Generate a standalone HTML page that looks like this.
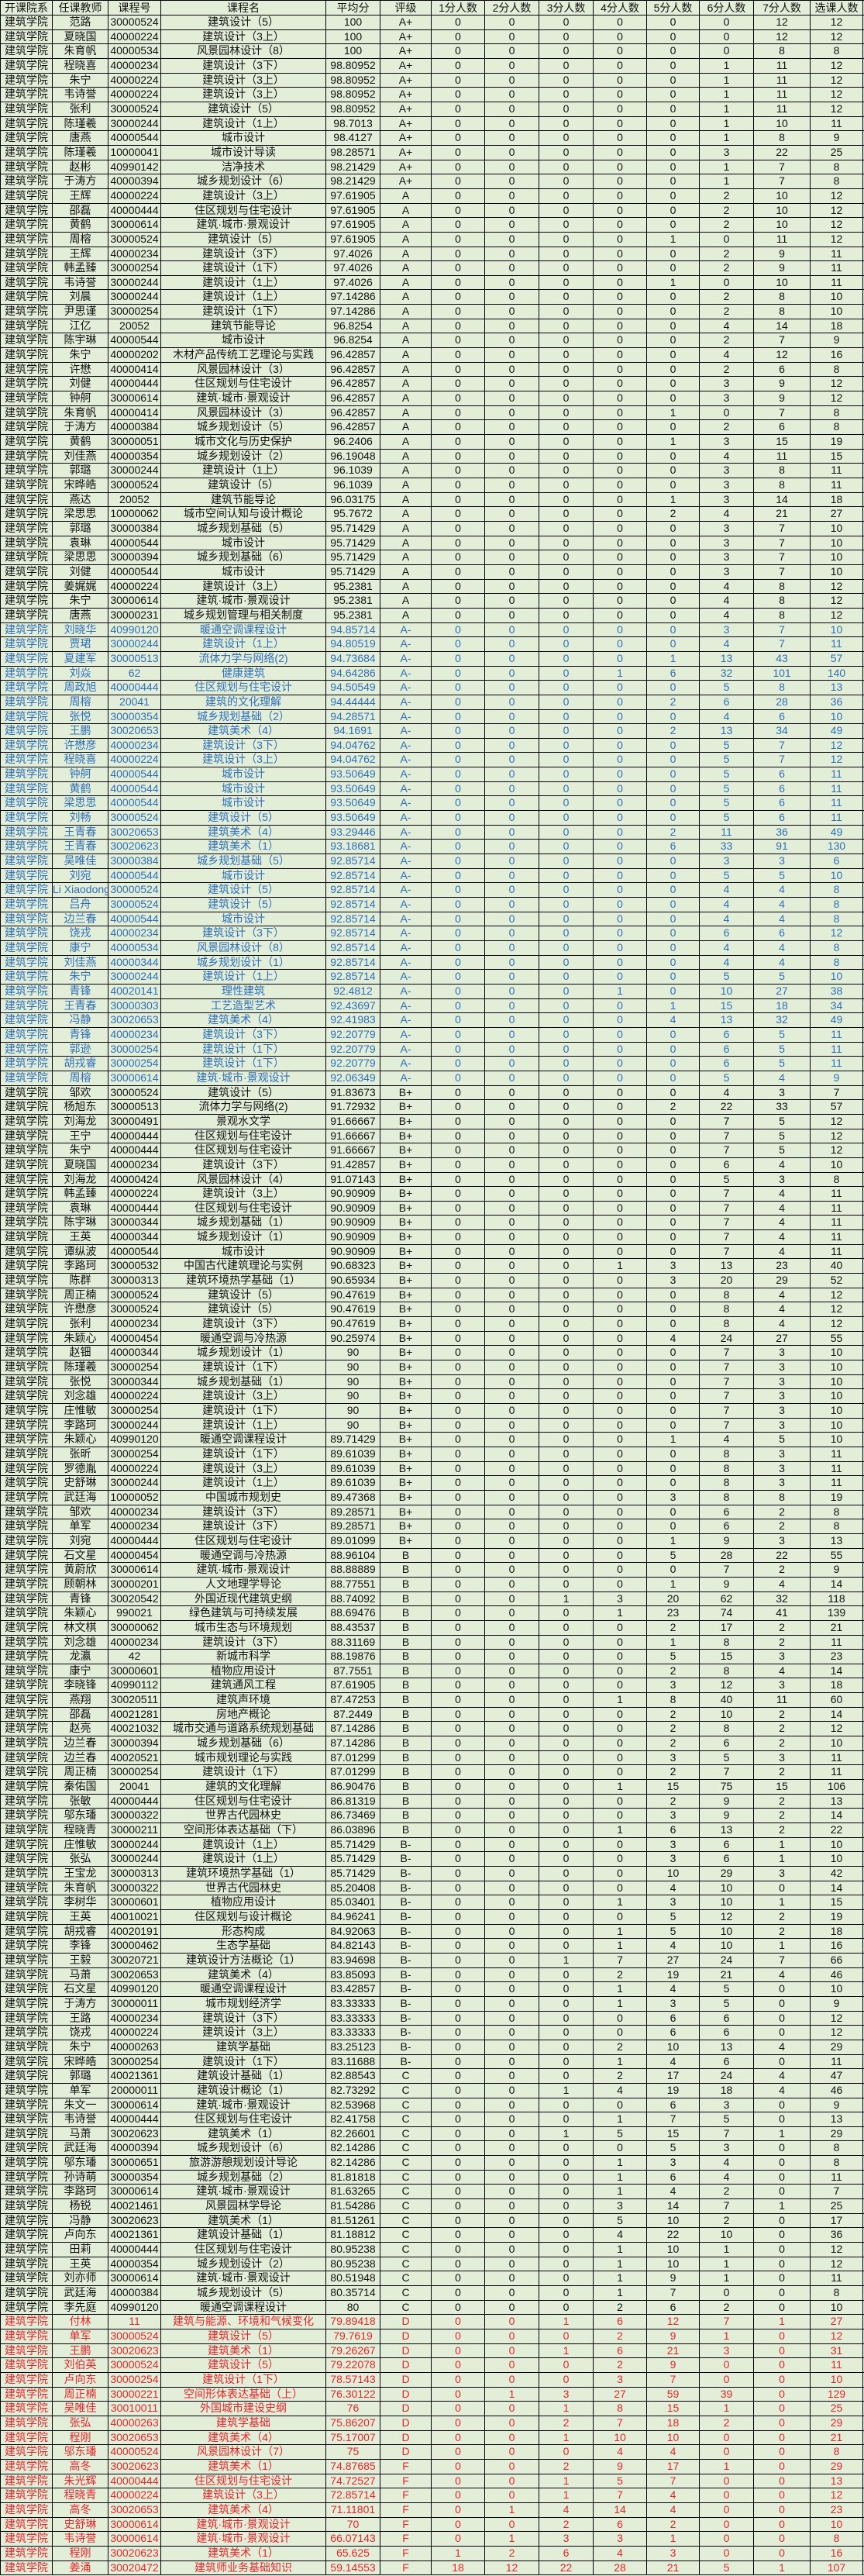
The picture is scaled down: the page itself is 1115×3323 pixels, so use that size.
<!DOCTYPE html>
<html><head><meta charset="utf-8">
<style>
*{margin:0;padding:0;box-sizing:border-box}
html,body{width:1115px;height:3323px;background:#e3eed9;overflow:hidden}
body{font-family:"Liberation Sans","Noto Sans CJK SC",sans-serif;font-size:14px;color:#111}
.t{position:absolute;left:0;top:0;width:1115px;border-top:1px solid #000}
.r{display:flex;height:18.66px;border-bottom:1px solid #000;line-height:17.5px;white-space:nowrap}
.h{height:19px;line-height:18px}
.r i{font-style:normal;text-align:center;border-right:1px solid #000;overflow:hidden;flex:none}
.r i:nth-child(1){width:68px;text-align:left;padding-left:5px;border-left:1px solid #000}
.r i:nth-child(2){width:72px}
.r i:nth-child(3){width:68px}
.r i:nth-child(4){width:213px}
.r i:nth-child(5){width:70px}
.r i:nth-child(6){width:66px}
.r i:nth-child(7){width:69px}
.r i:nth-child(8){width:70px}
.r i:nth-child(9){width:70px}
.r i:nth-child(10){width:69px}
.r i:nth-child(11){width:68px}
.r i:nth-child(12){width:70px}
.r i:nth-child(13){width:73px}
.r i:nth-child(14){width:68px}
.b{color:#2f6fb8}
.d{color:#e3262b}
</style></head><body>
<div class="t">
<div class="r h"><i>开课院系</i><i>任课教师</i><i>课程号</i><i>课程名</i><i>平均分</i><i>评级</i><i>1分人数</i><i>2分人数</i><i>3分人数</i><i>4分人数</i><i>5分人数</i><i>6分人数</i><i>7分人数</i><i>选课人数</i></div>
<div class="r"><i>建筑学院</i><i>范路</i><i>30000524</i><i>建筑设计（5）</i><i>100</i><i>A+</i><i>0</i><i>0</i><i>0</i><i>0</i><i>0</i><i>0</i><i>12</i><i>12</i></div>
<div class="r"><i>建筑学院</i><i>夏晓国</i><i>40000224</i><i>建筑设计（3上）</i><i>100</i><i>A+</i><i>0</i><i>0</i><i>0</i><i>0</i><i>0</i><i>0</i><i>12</i><i>12</i></div>
<div class="r"><i>建筑学院</i><i>朱育帆</i><i>40000534</i><i>风景园林设计（8）</i><i>100</i><i>A+</i><i>0</i><i>0</i><i>0</i><i>0</i><i>0</i><i>0</i><i>8</i><i>8</i></div>
<div class="r"><i>建筑学院</i><i>程晓喜</i><i>40000234</i><i>建筑设计（3下）</i><i>98.80952</i><i>A+</i><i>0</i><i>0</i><i>0</i><i>0</i><i>0</i><i>1</i><i>11</i><i>12</i></div>
<div class="r"><i>建筑学院</i><i>朱宁</i><i>40000224</i><i>建筑设计（3上）</i><i>98.80952</i><i>A+</i><i>0</i><i>0</i><i>0</i><i>0</i><i>0</i><i>1</i><i>11</i><i>12</i></div>
<div class="r"><i>建筑学院</i><i>韦诗誉</i><i>40000224</i><i>建筑设计（3上）</i><i>98.80952</i><i>A+</i><i>0</i><i>0</i><i>0</i><i>0</i><i>0</i><i>1</i><i>11</i><i>12</i></div>
<div class="r"><i>建筑学院</i><i>张利</i><i>30000524</i><i>建筑设计（5）</i><i>98.80952</i><i>A+</i><i>0</i><i>0</i><i>0</i><i>0</i><i>0</i><i>1</i><i>11</i><i>12</i></div>
<div class="r"><i>建筑学院</i><i>陈瑾羲</i><i>30000244</i><i>建筑设计（1上）</i><i>98.7013</i><i>A+</i><i>0</i><i>0</i><i>0</i><i>0</i><i>0</i><i>1</i><i>10</i><i>11</i></div>
<div class="r"><i>建筑学院</i><i>唐燕</i><i>40000544</i><i>城市设计</i><i>98.4127</i><i>A+</i><i>0</i><i>0</i><i>0</i><i>0</i><i>0</i><i>1</i><i>8</i><i>9</i></div>
<div class="r"><i>建筑学院</i><i>陈瑾羲</i><i>10000041</i><i>城市设计导读</i><i>98.28571</i><i>A+</i><i>0</i><i>0</i><i>0</i><i>0</i><i>0</i><i>3</i><i>22</i><i>25</i></div>
<div class="r"><i>建筑学院</i><i>赵彬</i><i>40990142</i><i>洁净技术</i><i>98.21429</i><i>A+</i><i>0</i><i>0</i><i>0</i><i>0</i><i>0</i><i>1</i><i>7</i><i>8</i></div>
<div class="r"><i>建筑学院</i><i>于涛方</i><i>40000394</i><i>城乡规划设计（6）</i><i>98.21429</i><i>A+</i><i>0</i><i>0</i><i>0</i><i>0</i><i>0</i><i>1</i><i>7</i><i>8</i></div>
<div class="r"><i>建筑学院</i><i>王辉</i><i>40000224</i><i>建筑设计（3上）</i><i>97.61905</i><i>A</i><i>0</i><i>0</i><i>0</i><i>0</i><i>0</i><i>2</i><i>10</i><i>12</i></div>
<div class="r"><i>建筑学院</i><i>邵磊</i><i>40000444</i><i>住区规划与住宅设计</i><i>97.61905</i><i>A</i><i>0</i><i>0</i><i>0</i><i>0</i><i>0</i><i>2</i><i>10</i><i>12</i></div>
<div class="r"><i>建筑学院</i><i>黄鹤</i><i>30000614</i><i>建筑·城市·景观设计</i><i>97.61905</i><i>A</i><i>0</i><i>0</i><i>0</i><i>0</i><i>0</i><i>2</i><i>10</i><i>12</i></div>
<div class="r"><i>建筑学院</i><i>周榕</i><i>30000524</i><i>建筑设计（5）</i><i>97.61905</i><i>A</i><i>0</i><i>0</i><i>0</i><i>0</i><i>1</i><i>0</i><i>11</i><i>12</i></div>
<div class="r"><i>建筑学院</i><i>王辉</i><i>40000234</i><i>建筑设计（3下）</i><i>97.4026</i><i>A</i><i>0</i><i>0</i><i>0</i><i>0</i><i>0</i><i>2</i><i>9</i><i>11</i></div>
<div class="r"><i>建筑学院</i><i>韩孟臻</i><i>30000254</i><i>建筑设计（1下）</i><i>97.4026</i><i>A</i><i>0</i><i>0</i><i>0</i><i>0</i><i>0</i><i>2</i><i>9</i><i>11</i></div>
<div class="r"><i>建筑学院</i><i>韦诗誉</i><i>30000244</i><i>建筑设计（1上）</i><i>97.4026</i><i>A</i><i>0</i><i>0</i><i>0</i><i>0</i><i>1</i><i>0</i><i>10</i><i>11</i></div>
<div class="r"><i>建筑学院</i><i>刘晨</i><i>30000244</i><i>建筑设计（1上）</i><i>97.14286</i><i>A</i><i>0</i><i>0</i><i>0</i><i>0</i><i>0</i><i>2</i><i>8</i><i>10</i></div>
<div class="r"><i>建筑学院</i><i>尹思谨</i><i>30000254</i><i>建筑设计（1下）</i><i>97.14286</i><i>A</i><i>0</i><i>0</i><i>0</i><i>0</i><i>0</i><i>2</i><i>8</i><i>10</i></div>
<div class="r"><i>建筑学院</i><i>江亿</i><i>20052</i><i>建筑节能导论</i><i>96.8254</i><i>A</i><i>0</i><i>0</i><i>0</i><i>0</i><i>0</i><i>4</i><i>14</i><i>18</i></div>
<div class="r"><i>建筑学院</i><i>陈宇琳</i><i>40000544</i><i>城市设计</i><i>96.8254</i><i>A</i><i>0</i><i>0</i><i>0</i><i>0</i><i>0</i><i>2</i><i>7</i><i>9</i></div>
<div class="r"><i>建筑学院</i><i>朱宁</i><i>40000202</i><i>木材产品传统工艺理论与实践</i><i>96.42857</i><i>A</i><i>0</i><i>0</i><i>0</i><i>0</i><i>0</i><i>4</i><i>12</i><i>16</i></div>
<div class="r"><i>建筑学院</i><i>许懋</i><i>40000414</i><i>风景园林设计（3）</i><i>96.42857</i><i>A</i><i>0</i><i>0</i><i>0</i><i>0</i><i>0</i><i>2</i><i>6</i><i>8</i></div>
<div class="r"><i>建筑学院</i><i>刘健</i><i>40000444</i><i>住区规划与住宅设计</i><i>96.42857</i><i>A</i><i>0</i><i>0</i><i>0</i><i>0</i><i>0</i><i>3</i><i>9</i><i>12</i></div>
<div class="r"><i>建筑学院</i><i>钟舸</i><i>30000614</i><i>建筑·城市·景观设计</i><i>96.42857</i><i>A</i><i>0</i><i>0</i><i>0</i><i>0</i><i>0</i><i>3</i><i>9</i><i>12</i></div>
<div class="r"><i>建筑学院</i><i>朱育帆</i><i>40000414</i><i>风景园林设计（3）</i><i>96.42857</i><i>A</i><i>0</i><i>0</i><i>0</i><i>0</i><i>1</i><i>0</i><i>7</i><i>8</i></div>
<div class="r"><i>建筑学院</i><i>于涛方</i><i>40000384</i><i>城乡规划设计（5）</i><i>96.42857</i><i>A</i><i>0</i><i>0</i><i>0</i><i>0</i><i>0</i><i>2</i><i>6</i><i>8</i></div>
<div class="r"><i>建筑学院</i><i>黄鹤</i><i>30000051</i><i>城市文化与历史保护</i><i>96.2406</i><i>A</i><i>0</i><i>0</i><i>0</i><i>0</i><i>1</i><i>3</i><i>15</i><i>19</i></div>
<div class="r"><i>建筑学院</i><i>刘佳燕</i><i>40000354</i><i>城乡规划设计（2）</i><i>96.19048</i><i>A</i><i>0</i><i>0</i><i>0</i><i>0</i><i>0</i><i>4</i><i>11</i><i>15</i></div>
<div class="r"><i>建筑学院</i><i>郭璐</i><i>30000244</i><i>建筑设计（1上）</i><i>96.1039</i><i>A</i><i>0</i><i>0</i><i>0</i><i>0</i><i>0</i><i>3</i><i>8</i><i>11</i></div>
<div class="r"><i>建筑学院</i><i>宋晔皓</i><i>30000524</i><i>建筑设计（5）</i><i>96.1039</i><i>A</i><i>0</i><i>0</i><i>0</i><i>0</i><i>0</i><i>3</i><i>8</i><i>11</i></div>
<div class="r"><i>建筑学院</i><i>燕达</i><i>20052</i><i>建筑节能导论</i><i>96.03175</i><i>A</i><i>0</i><i>0</i><i>0</i><i>0</i><i>1</i><i>3</i><i>14</i><i>18</i></div>
<div class="r"><i>建筑学院</i><i>梁思思</i><i>10000062</i><i>城市空间认知与设计概论</i><i>95.7672</i><i>A</i><i>0</i><i>0</i><i>0</i><i>0</i><i>2</i><i>4</i><i>21</i><i>27</i></div>
<div class="r"><i>建筑学院</i><i>郭璐</i><i>30000384</i><i>城乡规划基础（5）</i><i>95.71429</i><i>A</i><i>0</i><i>0</i><i>0</i><i>0</i><i>0</i><i>3</i><i>7</i><i>10</i></div>
<div class="r"><i>建筑学院</i><i>袁琳</i><i>40000544</i><i>城市设计</i><i>95.71429</i><i>A</i><i>0</i><i>0</i><i>0</i><i>0</i><i>0</i><i>3</i><i>7</i><i>10</i></div>
<div class="r"><i>建筑学院</i><i>梁思思</i><i>30000394</i><i>城乡规划基础（6）</i><i>95.71429</i><i>A</i><i>0</i><i>0</i><i>0</i><i>0</i><i>0</i><i>3</i><i>7</i><i>10</i></div>
<div class="r"><i>建筑学院</i><i>刘健</i><i>40000544</i><i>城市设计</i><i>95.71429</i><i>A</i><i>0</i><i>0</i><i>0</i><i>0</i><i>0</i><i>3</i><i>7</i><i>10</i></div>
<div class="r"><i>建筑学院</i><i>姜娓娓</i><i>40000224</i><i>建筑设计（3上）</i><i>95.2381</i><i>A</i><i>0</i><i>0</i><i>0</i><i>0</i><i>0</i><i>4</i><i>8</i><i>12</i></div>
<div class="r"><i>建筑学院</i><i>朱宁</i><i>30000614</i><i>建筑·城市·景观设计</i><i>95.2381</i><i>A</i><i>0</i><i>0</i><i>0</i><i>0</i><i>0</i><i>4</i><i>8</i><i>12</i></div>
<div class="r"><i>建筑学院</i><i>唐燕</i><i>30000231</i><i>城乡规划管理与相关制度</i><i>95.2381</i><i>A</i><i>0</i><i>0</i><i>0</i><i>0</i><i>0</i><i>4</i><i>8</i><i>12</i></div>
<div class="r b"><i>建筑学院</i><i>刘晓华</i><i>40990120</i><i>暖通空调课程设计</i><i>94.85714</i><i>A-</i><i>0</i><i>0</i><i>0</i><i>0</i><i>0</i><i>3</i><i>7</i><i>10</i></div>
<div class="r b"><i>建筑学院</i><i>贾珺</i><i>30000244</i><i>建筑设计（1上）</i><i>94.80519</i><i>A-</i><i>0</i><i>0</i><i>0</i><i>0</i><i>0</i><i>4</i><i>7</i><i>11</i></div>
<div class="r b"><i>建筑学院</i><i>夏建军</i><i>30000513</i><i>流体力学与网络(2)</i><i>94.73684</i><i>A-</i><i>0</i><i>0</i><i>0</i><i>0</i><i>1</i><i>13</i><i>43</i><i>57</i></div>
<div class="r b"><i>建筑学院</i><i>刘焱</i><i>62</i><i>健康建筑</i><i>94.64286</i><i>A-</i><i>0</i><i>0</i><i>0</i><i>1</i><i>6</i><i>32</i><i>101</i><i>140</i></div>
<div class="r b"><i>建筑学院</i><i>周政旭</i><i>40000444</i><i>住区规划与住宅设计</i><i>94.50549</i><i>A-</i><i>0</i><i>0</i><i>0</i><i>0</i><i>0</i><i>5</i><i>8</i><i>13</i></div>
<div class="r b"><i>建筑学院</i><i>周榕</i><i>20041</i><i>建筑的文化理解</i><i>94.44444</i><i>A-</i><i>0</i><i>0</i><i>0</i><i>0</i><i>2</i><i>6</i><i>28</i><i>36</i></div>
<div class="r b"><i>建筑学院</i><i>张悦</i><i>30000354</i><i>城乡规划基础（2）</i><i>94.28571</i><i>A-</i><i>0</i><i>0</i><i>0</i><i>0</i><i>0</i><i>4</i><i>6</i><i>10</i></div>
<div class="r b"><i>建筑学院</i><i>王鹏</i><i>30020653</i><i>建筑美术（4）</i><i>94.1691</i><i>A-</i><i>0</i><i>0</i><i>0</i><i>0</i><i>2</i><i>13</i><i>34</i><i>49</i></div>
<div class="r b"><i>建筑学院</i><i>许懋彦</i><i>40000234</i><i>建筑设计（3下）</i><i>94.04762</i><i>A-</i><i>0</i><i>0</i><i>0</i><i>0</i><i>0</i><i>5</i><i>7</i><i>12</i></div>
<div class="r b"><i>建筑学院</i><i>程晓喜</i><i>40000224</i><i>建筑设计（3上）</i><i>94.04762</i><i>A-</i><i>0</i><i>0</i><i>0</i><i>0</i><i>0</i><i>5</i><i>7</i><i>12</i></div>
<div class="r b"><i>建筑学院</i><i>钟舸</i><i>40000544</i><i>城市设计</i><i>93.50649</i><i>A-</i><i>0</i><i>0</i><i>0</i><i>0</i><i>0</i><i>5</i><i>6</i><i>11</i></div>
<div class="r b"><i>建筑学院</i><i>黄鹤</i><i>40000544</i><i>城市设计</i><i>93.50649</i><i>A-</i><i>0</i><i>0</i><i>0</i><i>0</i><i>0</i><i>5</i><i>6</i><i>11</i></div>
<div class="r b"><i>建筑学院</i><i>梁思思</i><i>40000544</i><i>城市设计</i><i>93.50649</i><i>A-</i><i>0</i><i>0</i><i>0</i><i>0</i><i>0</i><i>5</i><i>6</i><i>11</i></div>
<div class="r b"><i>建筑学院</i><i>刘畅</i><i>30000524</i><i>建筑设计（5）</i><i>93.50649</i><i>A-</i><i>0</i><i>0</i><i>0</i><i>0</i><i>0</i><i>5</i><i>6</i><i>11</i></div>
<div class="r b"><i>建筑学院</i><i>王青春</i><i>30020653</i><i>建筑美术（4）</i><i>93.29446</i><i>A-</i><i>0</i><i>0</i><i>0</i><i>0</i><i>2</i><i>11</i><i>36</i><i>49</i></div>
<div class="r b"><i>建筑学院</i><i>王青春</i><i>30020623</i><i>建筑美术（1）</i><i>93.18681</i><i>A-</i><i>0</i><i>0</i><i>0</i><i>0</i><i>6</i><i>33</i><i>91</i><i>130</i></div>
<div class="r b"><i>建筑学院</i><i>吴唯佳</i><i>30000384</i><i>城乡规划基础（5）</i><i>92.85714</i><i>A-</i><i>0</i><i>0</i><i>0</i><i>0</i><i>0</i><i>3</i><i>3</i><i>6</i></div>
<div class="r b"><i>建筑学院</i><i>刘宛</i><i>40000544</i><i>城市设计</i><i>92.85714</i><i>A-</i><i>0</i><i>0</i><i>0</i><i>0</i><i>0</i><i>5</i><i>5</i><i>10</i></div>
<div class="r b"><i>建筑学院</i><i>Li Xiaodong</i><i>30000524</i><i>建筑设计（5）</i><i>92.85714</i><i>A-</i><i>0</i><i>0</i><i>0</i><i>0</i><i>0</i><i>4</i><i>4</i><i>8</i></div>
<div class="r b"><i>建筑学院</i><i>吕舟</i><i>30000524</i><i>建筑设计（5）</i><i>92.85714</i><i>A-</i><i>0</i><i>0</i><i>0</i><i>0</i><i>0</i><i>4</i><i>4</i><i>8</i></div>
<div class="r b"><i>建筑学院</i><i>边兰春</i><i>40000544</i><i>城市设计</i><i>92.85714</i><i>A-</i><i>0</i><i>0</i><i>0</i><i>0</i><i>0</i><i>4</i><i>4</i><i>8</i></div>
<div class="r b"><i>建筑学院</i><i>饶戎</i><i>40000234</i><i>建筑设计（3下）</i><i>92.85714</i><i>A-</i><i>0</i><i>0</i><i>0</i><i>0</i><i>0</i><i>6</i><i>6</i><i>12</i></div>
<div class="r b"><i>建筑学院</i><i>康宁</i><i>40000534</i><i>风景园林设计（8）</i><i>92.85714</i><i>A-</i><i>0</i><i>0</i><i>0</i><i>0</i><i>0</i><i>4</i><i>4</i><i>8</i></div>
<div class="r b"><i>建筑学院</i><i>刘佳燕</i><i>40000344</i><i>城乡规划设计（1）</i><i>92.85714</i><i>A-</i><i>0</i><i>0</i><i>0</i><i>0</i><i>0</i><i>4</i><i>4</i><i>8</i></div>
<div class="r b"><i>建筑学院</i><i>朱宁</i><i>30000244</i><i>建筑设计（1上）</i><i>92.85714</i><i>A-</i><i>0</i><i>0</i><i>0</i><i>0</i><i>0</i><i>5</i><i>5</i><i>10</i></div>
<div class="r b"><i>建筑学院</i><i>青锋</i><i>40020141</i><i>理性建筑</i><i>92.4812</i><i>A-</i><i>0</i><i>0</i><i>0</i><i>1</i><i>0</i><i>10</i><i>27</i><i>38</i></div>
<div class="r b"><i>建筑学院</i><i>王青春</i><i>30000303</i><i>工艺造型艺术</i><i>92.43697</i><i>A-</i><i>0</i><i>0</i><i>0</i><i>0</i><i>1</i><i>15</i><i>18</i><i>34</i></div>
<div class="r b"><i>建筑学院</i><i>冯静</i><i>30020653</i><i>建筑美术（4）</i><i>92.41983</i><i>A-</i><i>0</i><i>0</i><i>0</i><i>0</i><i>4</i><i>13</i><i>32</i><i>49</i></div>
<div class="r b"><i>建筑学院</i><i>青锋</i><i>40000234</i><i>建筑设计（3下）</i><i>92.20779</i><i>A-</i><i>0</i><i>0</i><i>0</i><i>0</i><i>0</i><i>6</i><i>5</i><i>11</i></div>
<div class="r b"><i>建筑学院</i><i>郭逊</i><i>30000254</i><i>建筑设计（1下）</i><i>92.20779</i><i>A-</i><i>0</i><i>0</i><i>0</i><i>0</i><i>0</i><i>6</i><i>5</i><i>11</i></div>
<div class="r b"><i>建筑学院</i><i>胡戎睿</i><i>30000254</i><i>建筑设计（1下）</i><i>92.20779</i><i>A-</i><i>0</i><i>0</i><i>0</i><i>0</i><i>0</i><i>6</i><i>5</i><i>11</i></div>
<div class="r b"><i>建筑学院</i><i>周榕</i><i>30000614</i><i>建筑·城市·景观设计</i><i>92.06349</i><i>A-</i><i>0</i><i>0</i><i>0</i><i>0</i><i>0</i><i>5</i><i>4</i><i>9</i></div>
<div class="r"><i>建筑学院</i><i>邹欢</i><i>30000524</i><i>建筑设计（5）</i><i>91.83673</i><i>B+</i><i>0</i><i>0</i><i>0</i><i>0</i><i>0</i><i>4</i><i>3</i><i>7</i></div>
<div class="r"><i>建筑学院</i><i>杨旭东</i><i>30000513</i><i>流体力学与网络(2)</i><i>91.72932</i><i>B+</i><i>0</i><i>0</i><i>0</i><i>0</i><i>2</i><i>22</i><i>33</i><i>57</i></div>
<div class="r"><i>建筑学院</i><i>刘海龙</i><i>30000491</i><i>景观水文学</i><i>91.66667</i><i>B+</i><i>0</i><i>0</i><i>0</i><i>0</i><i>0</i><i>7</i><i>5</i><i>12</i></div>
<div class="r"><i>建筑学院</i><i>王宁</i><i>40000444</i><i>住区规划与住宅设计</i><i>91.66667</i><i>B+</i><i>0</i><i>0</i><i>0</i><i>0</i><i>0</i><i>7</i><i>5</i><i>12</i></div>
<div class="r"><i>建筑学院</i><i>朱宁</i><i>40000444</i><i>住区规划与住宅设计</i><i>91.66667</i><i>B+</i><i>0</i><i>0</i><i>0</i><i>0</i><i>0</i><i>7</i><i>5</i><i>12</i></div>
<div class="r"><i>建筑学院</i><i>夏晓国</i><i>40000234</i><i>建筑设计（3下）</i><i>91.42857</i><i>B+</i><i>0</i><i>0</i><i>0</i><i>0</i><i>0</i><i>6</i><i>4</i><i>10</i></div>
<div class="r"><i>建筑学院</i><i>刘海龙</i><i>40000424</i><i>风景园林设计（4）</i><i>91.07143</i><i>B+</i><i>0</i><i>0</i><i>0</i><i>0</i><i>0</i><i>5</i><i>3</i><i>8</i></div>
<div class="r"><i>建筑学院</i><i>韩孟臻</i><i>40000224</i><i>建筑设计（3上）</i><i>90.90909</i><i>B+</i><i>0</i><i>0</i><i>0</i><i>0</i><i>0</i><i>7</i><i>4</i><i>11</i></div>
<div class="r"><i>建筑学院</i><i>袁琳</i><i>40000444</i><i>住区规划与住宅设计</i><i>90.90909</i><i>B+</i><i>0</i><i>0</i><i>0</i><i>0</i><i>0</i><i>7</i><i>4</i><i>11</i></div>
<div class="r"><i>建筑学院</i><i>陈宇琳</i><i>30000344</i><i>城乡规划基础（1）</i><i>90.90909</i><i>B+</i><i>0</i><i>0</i><i>0</i><i>0</i><i>0</i><i>7</i><i>4</i><i>11</i></div>
<div class="r"><i>建筑学院</i><i>王英</i><i>40000344</i><i>城乡规划设计（1）</i><i>90.90909</i><i>B+</i><i>0</i><i>0</i><i>0</i><i>0</i><i>0</i><i>7</i><i>4</i><i>11</i></div>
<div class="r"><i>建筑学院</i><i>谭纵波</i><i>40000544</i><i>城市设计</i><i>90.90909</i><i>B+</i><i>0</i><i>0</i><i>0</i><i>0</i><i>0</i><i>7</i><i>4</i><i>11</i></div>
<div class="r"><i>建筑学院</i><i>李路珂</i><i>30000532</i><i>中国古代建筑理论与实例</i><i>90.68323</i><i>B+</i><i>0</i><i>0</i><i>0</i><i>1</i><i>3</i><i>13</i><i>23</i><i>40</i></div>
<div class="r"><i>建筑学院</i><i>陈群</i><i>30000313</i><i>建筑环境热学基础（1）</i><i>90.65934</i><i>B+</i><i>0</i><i>0</i><i>0</i><i>0</i><i>3</i><i>20</i><i>29</i><i>52</i></div>
<div class="r"><i>建筑学院</i><i>周正楠</i><i>30000524</i><i>建筑设计（5）</i><i>90.47619</i><i>B+</i><i>0</i><i>0</i><i>0</i><i>0</i><i>0</i><i>8</i><i>4</i><i>12</i></div>
<div class="r"><i>建筑学院</i><i>许懋彦</i><i>30000524</i><i>建筑设计（5）</i><i>90.47619</i><i>B+</i><i>0</i><i>0</i><i>0</i><i>0</i><i>0</i><i>8</i><i>4</i><i>12</i></div>
<div class="r"><i>建筑学院</i><i>张利</i><i>40000234</i><i>建筑设计（3下）</i><i>90.47619</i><i>B+</i><i>0</i><i>0</i><i>0</i><i>0</i><i>0</i><i>8</i><i>4</i><i>12</i></div>
<div class="r"><i>建筑学院</i><i>朱颖心</i><i>40000454</i><i>暖通空调与冷热源</i><i>90.25974</i><i>B+</i><i>0</i><i>0</i><i>0</i><i>0</i><i>4</i><i>24</i><i>27</i><i>55</i></div>
<div class="r"><i>建筑学院</i><i>赵钿</i><i>40000344</i><i>城乡规划设计（1）</i><i>90</i><i>B+</i><i>0</i><i>0</i><i>0</i><i>0</i><i>0</i><i>7</i><i>3</i><i>10</i></div>
<div class="r"><i>建筑学院</i><i>陈瑾羲</i><i>30000254</i><i>建筑设计（1下）</i><i>90</i><i>B+</i><i>0</i><i>0</i><i>0</i><i>0</i><i>0</i><i>7</i><i>3</i><i>10</i></div>
<div class="r"><i>建筑学院</i><i>张悦</i><i>30000344</i><i>城乡规划基础（1）</i><i>90</i><i>B+</i><i>0</i><i>0</i><i>0</i><i>0</i><i>0</i><i>7</i><i>3</i><i>10</i></div>
<div class="r"><i>建筑学院</i><i>刘念雄</i><i>40000224</i><i>建筑设计（3上）</i><i>90</i><i>B+</i><i>0</i><i>0</i><i>0</i><i>0</i><i>0</i><i>7</i><i>3</i><i>10</i></div>
<div class="r"><i>建筑学院</i><i>庄惟敏</i><i>30000254</i><i>建筑设计（1下）</i><i>90</i><i>B+</i><i>0</i><i>0</i><i>0</i><i>0</i><i>0</i><i>7</i><i>3</i><i>10</i></div>
<div class="r"><i>建筑学院</i><i>李路珂</i><i>30000244</i><i>建筑设计（1上）</i><i>90</i><i>B+</i><i>0</i><i>0</i><i>0</i><i>0</i><i>0</i><i>7</i><i>3</i><i>10</i></div>
<div class="r"><i>建筑学院</i><i>朱颖心</i><i>40990120</i><i>暖通空调课程设计</i><i>89.71429</i><i>B+</i><i>0</i><i>0</i><i>0</i><i>0</i><i>1</i><i>4</i><i>5</i><i>10</i></div>
<div class="r"><i>建筑学院</i><i>张昕</i><i>30000254</i><i>建筑设计（1下）</i><i>89.61039</i><i>B+</i><i>0</i><i>0</i><i>0</i><i>0</i><i>0</i><i>8</i><i>3</i><i>11</i></div>
<div class="r"><i>建筑学院</i><i>罗德胤</i><i>40000224</i><i>建筑设计（3上）</i><i>89.61039</i><i>B+</i><i>0</i><i>0</i><i>0</i><i>0</i><i>0</i><i>8</i><i>3</i><i>11</i></div>
<div class="r"><i>建筑学院</i><i>史舒琳</i><i>30000244</i><i>建筑设计（1上）</i><i>89.61039</i><i>B+</i><i>0</i><i>0</i><i>0</i><i>0</i><i>0</i><i>8</i><i>3</i><i>11</i></div>
<div class="r"><i>建筑学院</i><i>武廷海</i><i>10000052</i><i>中国城市规划史</i><i>89.47368</i><i>B+</i><i>0</i><i>0</i><i>0</i><i>0</i><i>3</i><i>8</i><i>8</i><i>19</i></div>
<div class="r"><i>建筑学院</i><i>邹欢</i><i>40000234</i><i>建筑设计（3下）</i><i>89.28571</i><i>B+</i><i>0</i><i>0</i><i>0</i><i>0</i><i>0</i><i>6</i><i>2</i><i>8</i></div>
<div class="r"><i>建筑学院</i><i>单军</i><i>40000234</i><i>建筑设计（3下）</i><i>89.28571</i><i>B+</i><i>0</i><i>0</i><i>0</i><i>0</i><i>0</i><i>6</i><i>2</i><i>8</i></div>
<div class="r"><i>建筑学院</i><i>刘宛</i><i>40000444</i><i>住区规划与住宅设计</i><i>89.01099</i><i>B+</i><i>0</i><i>0</i><i>0</i><i>0</i><i>1</i><i>9</i><i>3</i><i>13</i></div>
<div class="r"><i>建筑学院</i><i>石文星</i><i>40000454</i><i>暖通空调与冷热源</i><i>88.96104</i><i>B</i><i>0</i><i>0</i><i>0</i><i>0</i><i>5</i><i>28</i><i>22</i><i>55</i></div>
<div class="r"><i>建筑学院</i><i>黄蔚欣</i><i>30000614</i><i>建筑·城市·景观设计</i><i>88.88889</i><i>B</i><i>0</i><i>0</i><i>0</i><i>0</i><i>0</i><i>7</i><i>2</i><i>9</i></div>
<div class="r"><i>建筑学院</i><i>顾朝林</i><i>30000201</i><i>人文地理学导论</i><i>88.77551</i><i>B</i><i>0</i><i>0</i><i>0</i><i>0</i><i>1</i><i>9</i><i>4</i><i>14</i></div>
<div class="r"><i>建筑学院</i><i>青锋</i><i>30020542</i><i>外国近现代建筑史纲</i><i>88.74092</i><i>B</i><i>0</i><i>0</i><i>1</i><i>3</i><i>20</i><i>62</i><i>32</i><i>118</i></div>
<div class="r"><i>建筑学院</i><i>朱颖心</i><i>990021</i><i>绿色建筑与可持续发展</i><i>88.69476</i><i>B</i><i>0</i><i>0</i><i>0</i><i>1</i><i>23</i><i>74</i><i>41</i><i>139</i></div>
<div class="r"><i>建筑学院</i><i>林文棋</i><i>30000062</i><i>城市生态与环境规划</i><i>88.43537</i><i>B</i><i>0</i><i>0</i><i>0</i><i>0</i><i>2</i><i>17</i><i>2</i><i>21</i></div>
<div class="r"><i>建筑学院</i><i>刘念雄</i><i>40000234</i><i>建筑设计（3下）</i><i>88.31169</i><i>B</i><i>0</i><i>0</i><i>0</i><i>0</i><i>1</i><i>8</i><i>2</i><i>11</i></div>
<div class="r"><i>建筑学院</i><i>龙瀛</i><i>42</i><i>新城市科学</i><i>88.19876</i><i>B</i><i>0</i><i>0</i><i>0</i><i>0</i><i>5</i><i>15</i><i>3</i><i>23</i></div>
<div class="r"><i>建筑学院</i><i>康宁</i><i>30000601</i><i>植物应用设计</i><i>87.7551</i><i>B</i><i>0</i><i>0</i><i>0</i><i>0</i><i>2</i><i>8</i><i>4</i><i>14</i></div>
<div class="r"><i>建筑学院</i><i>李晓锋</i><i>40990112</i><i>建筑通风工程</i><i>87.61905</i><i>B</i><i>0</i><i>0</i><i>0</i><i>0</i><i>3</i><i>12</i><i>3</i><i>18</i></div>
<div class="r"><i>建筑学院</i><i>燕翔</i><i>30020511</i><i>建筑声环境</i><i>87.47253</i><i>B</i><i>0</i><i>0</i><i>0</i><i>1</i><i>8</i><i>40</i><i>11</i><i>60</i></div>
<div class="r"><i>建筑学院</i><i>邵磊</i><i>40021281</i><i>房地产概论</i><i>87.2449</i><i>B</i><i>0</i><i>0</i><i>0</i><i>0</i><i>2</i><i>10</i><i>2</i><i>14</i></div>
<div class="r"><i>建筑学院</i><i>赵亮</i><i>40021032</i><i>城市交通与道路系统规划基础</i><i>87.14286</i><i>B</i><i>0</i><i>0</i><i>0</i><i>0</i><i>2</i><i>8</i><i>2</i><i>12</i></div>
<div class="r"><i>建筑学院</i><i>边兰春</i><i>30000394</i><i>城乡规划基础（6）</i><i>87.14286</i><i>B</i><i>0</i><i>0</i><i>0</i><i>0</i><i>2</i><i>6</i><i>2</i><i>10</i></div>
<div class="r"><i>建筑学院</i><i>边兰春</i><i>40020521</i><i>城市规划理论与实践</i><i>87.01299</i><i>B</i><i>0</i><i>0</i><i>0</i><i>0</i><i>3</i><i>5</i><i>3</i><i>11</i></div>
<div class="r"><i>建筑学院</i><i>周正楠</i><i>30000254</i><i>建筑设计（1下）</i><i>87.01299</i><i>B</i><i>0</i><i>0</i><i>0</i><i>0</i><i>2</i><i>7</i><i>2</i><i>11</i></div>
<div class="r"><i>建筑学院</i><i>秦佑国</i><i>20041</i><i>建筑的文化理解</i><i>86.90476</i><i>B</i><i>0</i><i>0</i><i>0</i><i>1</i><i>15</i><i>75</i><i>15</i><i>106</i></div>
<div class="r"><i>建筑学院</i><i>张敏</i><i>40000444</i><i>住区规划与住宅设计</i><i>86.81319</i><i>B</i><i>0</i><i>0</i><i>0</i><i>0</i><i>2</i><i>9</i><i>2</i><i>13</i></div>
<div class="r"><i>建筑学院</i><i>邬东璠</i><i>30000322</i><i>世界古代园林史</i><i>86.73469</i><i>B</i><i>0</i><i>0</i><i>0</i><i>0</i><i>3</i><i>9</i><i>2</i><i>14</i></div>
<div class="r"><i>建筑学院</i><i>程晓青</i><i>30000211</i><i>空间形体表达基础（下）</i><i>86.03896</i><i>B</i><i>0</i><i>0</i><i>0</i><i>1</i><i>6</i><i>13</i><i>2</i><i>22</i></div>
<div class="r"><i>建筑学院</i><i>庄惟敏</i><i>30000244</i><i>建筑设计（1上）</i><i>85.71429</i><i>B-</i><i>0</i><i>0</i><i>0</i><i>0</i><i>3</i><i>6</i><i>1</i><i>10</i></div>
<div class="r"><i>建筑学院</i><i>张弘</i><i>30000244</i><i>建筑设计（1上）</i><i>85.71429</i><i>B-</i><i>0</i><i>0</i><i>0</i><i>0</i><i>3</i><i>6</i><i>1</i><i>10</i></div>
<div class="r"><i>建筑学院</i><i>王宝龙</i><i>30000313</i><i>建筑环境热学基础（1）</i><i>85.71429</i><i>B-</i><i>0</i><i>0</i><i>0</i><i>0</i><i>10</i><i>29</i><i>3</i><i>42</i></div>
<div class="r"><i>建筑学院</i><i>朱育帆</i><i>30000322</i><i>世界古代园林史</i><i>85.20408</i><i>B-</i><i>0</i><i>0</i><i>0</i><i>0</i><i>4</i><i>10</i><i>0</i><i>14</i></div>
<div class="r"><i>建筑学院</i><i>李树华</i><i>30000601</i><i>植物应用设计</i><i>85.03401</i><i>B-</i><i>0</i><i>0</i><i>0</i><i>1</i><i>3</i><i>10</i><i>1</i><i>15</i></div>
<div class="r"><i>建筑学院</i><i>王英</i><i>40010021</i><i>住区规划与设计概论</i><i>84.96241</i><i>B-</i><i>0</i><i>0</i><i>0</i><i>0</i><i>5</i><i>12</i><i>2</i><i>19</i></div>
<div class="r"><i>建筑学院</i><i>胡戎睿</i><i>40020191</i><i>形态构成</i><i>84.92063</i><i>B-</i><i>0</i><i>0</i><i>0</i><i>1</i><i>5</i><i>10</i><i>2</i><i>18</i></div>
<div class="r"><i>建筑学院</i><i>李锋</i><i>30000462</i><i>生态学基础</i><i>84.82143</i><i>B-</i><i>0</i><i>0</i><i>0</i><i>1</i><i>4</i><i>10</i><i>1</i><i>16</i></div>
<div class="r"><i>建筑学院</i><i>王毅</i><i>30020721</i><i>建筑设计方法概论（1）</i><i>83.94698</i><i>B-</i><i>0</i><i>0</i><i>1</i><i>7</i><i>27</i><i>24</i><i>7</i><i>66</i></div>
<div class="r"><i>建筑学院</i><i>马萧</i><i>30020653</i><i>建筑美术（4）</i><i>83.85093</i><i>B-</i><i>0</i><i>0</i><i>0</i><i>2</i><i>19</i><i>21</i><i>4</i><i>46</i></div>
<div class="r"><i>建筑学院</i><i>石文星</i><i>40990120</i><i>暖通空调课程设计</i><i>83.42857</i><i>B-</i><i>0</i><i>0</i><i>0</i><i>1</i><i>4</i><i>5</i><i>0</i><i>10</i></div>
<div class="r"><i>建筑学院</i><i>于涛方</i><i>30000011</i><i>城市规划经济学</i><i>83.33333</i><i>B-</i><i>0</i><i>0</i><i>0</i><i>1</i><i>3</i><i>5</i><i>0</i><i>9</i></div>
<div class="r"><i>建筑学院</i><i>王路</i><i>40000234</i><i>建筑设计（3下）</i><i>83.33333</i><i>B-</i><i>0</i><i>0</i><i>0</i><i>0</i><i>6</i><i>6</i><i>0</i><i>12</i></div>
<div class="r"><i>建筑学院</i><i>饶戎</i><i>40000224</i><i>建筑设计（3上）</i><i>83.33333</i><i>B-</i><i>0</i><i>0</i><i>0</i><i>0</i><i>6</i><i>6</i><i>0</i><i>12</i></div>
<div class="r"><i>建筑学院</i><i>朱宁</i><i>40000263</i><i>建筑学基础</i><i>83.25123</i><i>B-</i><i>0</i><i>0</i><i>0</i><i>2</i><i>10</i><i>13</i><i>4</i><i>29</i></div>
<div class="r"><i>建筑学院</i><i>宋晔皓</i><i>30000254</i><i>建筑设计（1下）</i><i>83.11688</i><i>B-</i><i>0</i><i>0</i><i>0</i><i>1</i><i>4</i><i>6</i><i>0</i><i>11</i></div>
<div class="r"><i>建筑学院</i><i>郭璐</i><i>40021361</i><i>建筑设计基础（1）</i><i>82.88543</i><i>C</i><i>0</i><i>0</i><i>0</i><i>2</i><i>17</i><i>24</i><i>4</i><i>47</i></div>
<div class="r"><i>建筑学院</i><i>单军</i><i>20000011</i><i>建筑设计概论（1）</i><i>82.73292</i><i>C</i><i>0</i><i>0</i><i>1</i><i>4</i><i>19</i><i>18</i><i>4</i><i>46</i></div>
<div class="r"><i>建筑学院</i><i>朱文一</i><i>30000614</i><i>建筑·城市·景观设计</i><i>82.53968</i><i>C</i><i>0</i><i>0</i><i>0</i><i>0</i><i>6</i><i>3</i><i>0</i><i>9</i></div>
<div class="r"><i>建筑学院</i><i>韦诗誉</i><i>40000444</i><i>住区规划与住宅设计</i><i>82.41758</i><i>C</i><i>0</i><i>0</i><i>0</i><i>1</i><i>7</i><i>5</i><i>0</i><i>13</i></div>
<div class="r"><i>建筑学院</i><i>马萧</i><i>30020623</i><i>建筑美术（1）</i><i>82.26601</i><i>C</i><i>0</i><i>0</i><i>1</i><i>5</i><i>15</i><i>7</i><i>1</i><i>29</i></div>
<div class="r"><i>建筑学院</i><i>武廷海</i><i>40000394</i><i>城乡规划设计（6）</i><i>82.14286</i><i>C</i><i>0</i><i>0</i><i>0</i><i>0</i><i>5</i><i>3</i><i>0</i><i>8</i></div>
<div class="r"><i>建筑学院</i><i>邬东璠</i><i>30000651</i><i>旅游游憩规划设计导论</i><i>82.14286</i><i>C</i><i>0</i><i>0</i><i>0</i><i>1</i><i>3</i><i>4</i><i>0</i><i>8</i></div>
<div class="r"><i>建筑学院</i><i>孙诗萌</i><i>30000354</i><i>城乡规划基础（2）</i><i>81.81818</i><i>C</i><i>0</i><i>0</i><i>0</i><i>1</i><i>6</i><i>4</i><i>0</i><i>11</i></div>
<div class="r"><i>建筑学院</i><i>李路珂</i><i>30000614</i><i>建筑·城市·景观设计</i><i>81.63265</i><i>C</i><i>0</i><i>0</i><i>0</i><i>1</i><i>4</i><i>2</i><i>0</i><i>7</i></div>
<div class="r"><i>建筑学院</i><i>杨锐</i><i>40021461</i><i>风景园林学导论</i><i>81.54286</i><i>C</i><i>0</i><i>0</i><i>0</i><i>3</i><i>14</i><i>7</i><i>1</i><i>25</i></div>
<div class="r"><i>建筑学院</i><i>冯静</i><i>30020623</i><i>建筑美术（1）</i><i>81.51261</i><i>C</i><i>0</i><i>0</i><i>0</i><i>5</i><i>10</i><i>2</i><i>0</i><i>17</i></div>
<div class="r"><i>建筑学院</i><i>卢向东</i><i>40021361</i><i>建筑设计基础（1）</i><i>81.18812</i><i>C</i><i>0</i><i>0</i><i>0</i><i>4</i><i>22</i><i>10</i><i>0</i><i>36</i></div>
<div class="r"><i>建筑学院</i><i>田莉</i><i>40000444</i><i>住区规划与住宅设计</i><i>80.95238</i><i>C</i><i>0</i><i>0</i><i>0</i><i>1</i><i>10</i><i>1</i><i>0</i><i>12</i></div>
<div class="r"><i>建筑学院</i><i>王英</i><i>40000354</i><i>城乡规划设计（2）</i><i>80.95238</i><i>C</i><i>0</i><i>0</i><i>0</i><i>1</i><i>10</i><i>1</i><i>0</i><i>12</i></div>
<div class="r"><i>建筑学院</i><i>刘亦师</i><i>30000614</i><i>建筑·城市·景观设计</i><i>80.51948</i><i>C</i><i>0</i><i>0</i><i>0</i><i>1</i><i>9</i><i>1</i><i>0</i><i>11</i></div>
<div class="r"><i>建筑学院</i><i>武廷海</i><i>40000384</i><i>城乡规划设计（5）</i><i>80.35714</i><i>C</i><i>0</i><i>0</i><i>0</i><i>1</i><i>7</i><i>0</i><i>0</i><i>8</i></div>
<div class="r"><i>建筑学院</i><i>李先庭</i><i>40990120</i><i>暖通空调课程设计</i><i>80</i><i>C</i><i>0</i><i>0</i><i>0</i><i>2</i><i>6</i><i>2</i><i>0</i><i>10</i></div>
<div class="r d"><i>建筑学院</i><i>付林</i><i>11</i><i>建筑与能源、环境和气候变化</i><i>79.89418</i><i>D</i><i>0</i><i>0</i><i>1</i><i>6</i><i>12</i><i>7</i><i>1</i><i>27</i></div>
<div class="r d"><i>建筑学院</i><i>单军</i><i>30000524</i><i>建筑设计（5）</i><i>79.7619</i><i>D</i><i>0</i><i>0</i><i>0</i><i>2</i><i>9</i><i>1</i><i>0</i><i>12</i></div>
<div class="r d"><i>建筑学院</i><i>王鹏</i><i>30020623</i><i>建筑美术（1）</i><i>79.26267</i><i>D</i><i>0</i><i>0</i><i>1</i><i>6</i><i>21</i><i>3</i><i>0</i><i>31</i></div>
<div class="r d"><i>建筑学院</i><i>刘伯英</i><i>30000524</i><i>建筑设计（5）</i><i>79.22078</i><i>D</i><i>0</i><i>0</i><i>0</i><i>2</i><i>9</i><i>0</i><i>0</i><i>11</i></div>
<div class="r d"><i>建筑学院</i><i>卢向东</i><i>30000254</i><i>建筑设计（1下）</i><i>78.57143</i><i>D</i><i>0</i><i>0</i><i>0</i><i>3</i><i>7</i><i>0</i><i>0</i><i>10</i></div>
<div class="r d"><i>建筑学院</i><i>周正楠</i><i>30000221</i><i>空间形体表达基础（上）</i><i>76.30122</i><i>D</i><i>0</i><i>1</i><i>3</i><i>27</i><i>59</i><i>39</i><i>0</i><i>129</i></div>
<div class="r d"><i>建筑学院</i><i>吴唯佳</i><i>30010011</i><i>外国城市建设史纲</i><i>76</i><i>D</i><i>0</i><i>0</i><i>1</i><i>8</i><i>15</i><i>1</i><i>0</i><i>25</i></div>
<div class="r d"><i>建筑学院</i><i>张弘</i><i>40000263</i><i>建筑学基础</i><i>75.86207</i><i>D</i><i>0</i><i>0</i><i>2</i><i>7</i><i>18</i><i>2</i><i>0</i><i>29</i></div>
<div class="r d"><i>建筑学院</i><i>程刚</i><i>30020653</i><i>建筑美术（4）</i><i>75.17007</i><i>D</i><i>0</i><i>0</i><i>1</i><i>10</i><i>10</i><i>0</i><i>0</i><i>21</i></div>
<div class="r d"><i>建筑学院</i><i>邬东璠</i><i>40000524</i><i>风景园林设计（7）</i><i>75</i><i>D</i><i>0</i><i>0</i><i>0</i><i>4</i><i>4</i><i>0</i><i>0</i><i>8</i></div>
<div class="r d"><i>建筑学院</i><i>高冬</i><i>30020623</i><i>建筑美术（1）</i><i>74.87685</i><i>F</i><i>0</i><i>0</i><i>2</i><i>9</i><i>17</i><i>1</i><i>0</i><i>29</i></div>
<div class="r d"><i>建筑学院</i><i>朱光辉</i><i>40000444</i><i>住区规划与住宅设计</i><i>74.72527</i><i>F</i><i>0</i><i>0</i><i>1</i><i>5</i><i>7</i><i>0</i><i>0</i><i>13</i></div>
<div class="r d"><i>建筑学院</i><i>程晓青</i><i>40000224</i><i>建筑设计（3上）</i><i>72.85714</i><i>F</i><i>0</i><i>0</i><i>1</i><i>7</i><i>4</i><i>0</i><i>0</i><i>12</i></div>
<div class="r d"><i>建筑学院</i><i>高冬</i><i>30020653</i><i>建筑美术（4）</i><i>71.11801</i><i>F</i><i>0</i><i>1</i><i>4</i><i>14</i><i>4</i><i>0</i><i>0</i><i>23</i></div>
<div class="r d"><i>建筑学院</i><i>史舒琳</i><i>30000614</i><i>建筑·城市·景观设计</i><i>70</i><i>F</i><i>0</i><i>0</i><i>2</i><i>6</i><i>2</i><i>0</i><i>0</i><i>10</i></div>
<div class="r d"><i>建筑学院</i><i>韦诗誉</i><i>30000614</i><i>建筑·城市·景观设计</i><i>66.07143</i><i>F</i><i>0</i><i>1</i><i>3</i><i>3</i><i>1</i><i>0</i><i>0</i><i>8</i></div>
<div class="r d"><i>建筑学院</i><i>程刚</i><i>30020623</i><i>建筑美术（1）</i><i>65.625</i><i>F</i><i>1</i><i>2</i><i>6</i><i>4</i><i>3</i><i>0</i><i>0</i><i>16</i></div>
<div class="r d"><i>建筑学院</i><i>姜涌</i><i>30020472</i><i>建筑师业务基础知识</i><i>59.14553</i><i>F</i><i>18</i><i>12</i><i>22</i><i>28</i><i>21</i><i>5</i><i>1</i><i>107</i></div>
</div>
</body></html>
